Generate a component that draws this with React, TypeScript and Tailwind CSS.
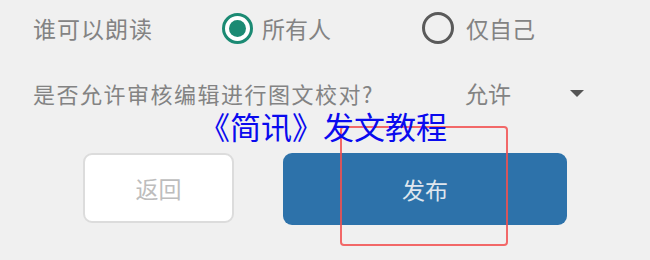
import React from 'react';

const font = { fontFamily: '"Noto Sans CJK SC", "Noto Sans", sans-serif' };

function Radio({ checked }: { checked?: boolean }) {
  if (checked) {
    return (
      <span className="flex h-[31px] w-[31px] items-center justify-center rounded-full border-[3px] border-[#1b8a73] bg-white">
        <span className="h-[17px] w-[17px] rounded-full bg-[#1b8a73]" />
      </span>
    );
  }
  return <span className="h-[32px] w-[32px] rounded-full border-[3px] border-[#5a5a5a]" />;
}

export default function App() {
  return (
    <div className="relative h-[260px] w-[650px] overflow-hidden bg-[#f0f0f0]" style={font}>
      {/* 朗读权限 */}
      <div className="flex h-[56px] items-center pl-[33px] text-[23px] text-[#838383]">
        <span className="w-[189px] tracking-[1px]">谁可以朗读</span>
        <label className="flex w-[200px] items-center gap-[9px]">
          <Radio checked />
          <span>所有人</span>
        </label>
        <label className="flex items-center gap-[12px]">
          <Radio />
          <span>仅自己</span>
        </label>
      </div>

      {/* 校对 */}
      <div className="mt-[9px] flex h-[56px] items-center pl-[33px] text-[22px] leading-[28px] text-[#838383]">
        <span className="w-[432px] tracking-[1.5px]">是否允许审核编辑进行图文校对?</span>
        <span className="w-[105px] text-[23px]">允许</span>
        <span className="h-0 w-0 border-x-[7px] border-t-[7px] border-x-transparent border-t-[#555]" />
      </div>

      {/* 按钮 */}
      <div className="mt-[32px] flex items-start pl-[83px]">
        <button className="flex h-[70px] w-[151px] items-center justify-center rounded-[9px] border-2 border-[#dcdcdc] bg-white text-[23px] text-[#bdbdbd]">
          返回
        </button>
        <button className="ml-[49px] flex h-[72px] w-[284px] items-center justify-center rounded-[9px] bg-[#2d72aa] text-[23px] text-[#dfe6ee]">
          发布
        </button>
      </div>

      {/* 红框标注 */}
      <div className="absolute left-[340px] top-[126px] h-[120px] w-[168px] rounded-[4px] border-[2.5px] border-[#f25050]/85" />

      {/* 标题水印 */}
      <div className="absolute left-[199px] top-[109px] text-[31px] leading-[34px] text-[#0a0aee]">
        《简讯》发文教程
      </div>
    </div>
  );
}
